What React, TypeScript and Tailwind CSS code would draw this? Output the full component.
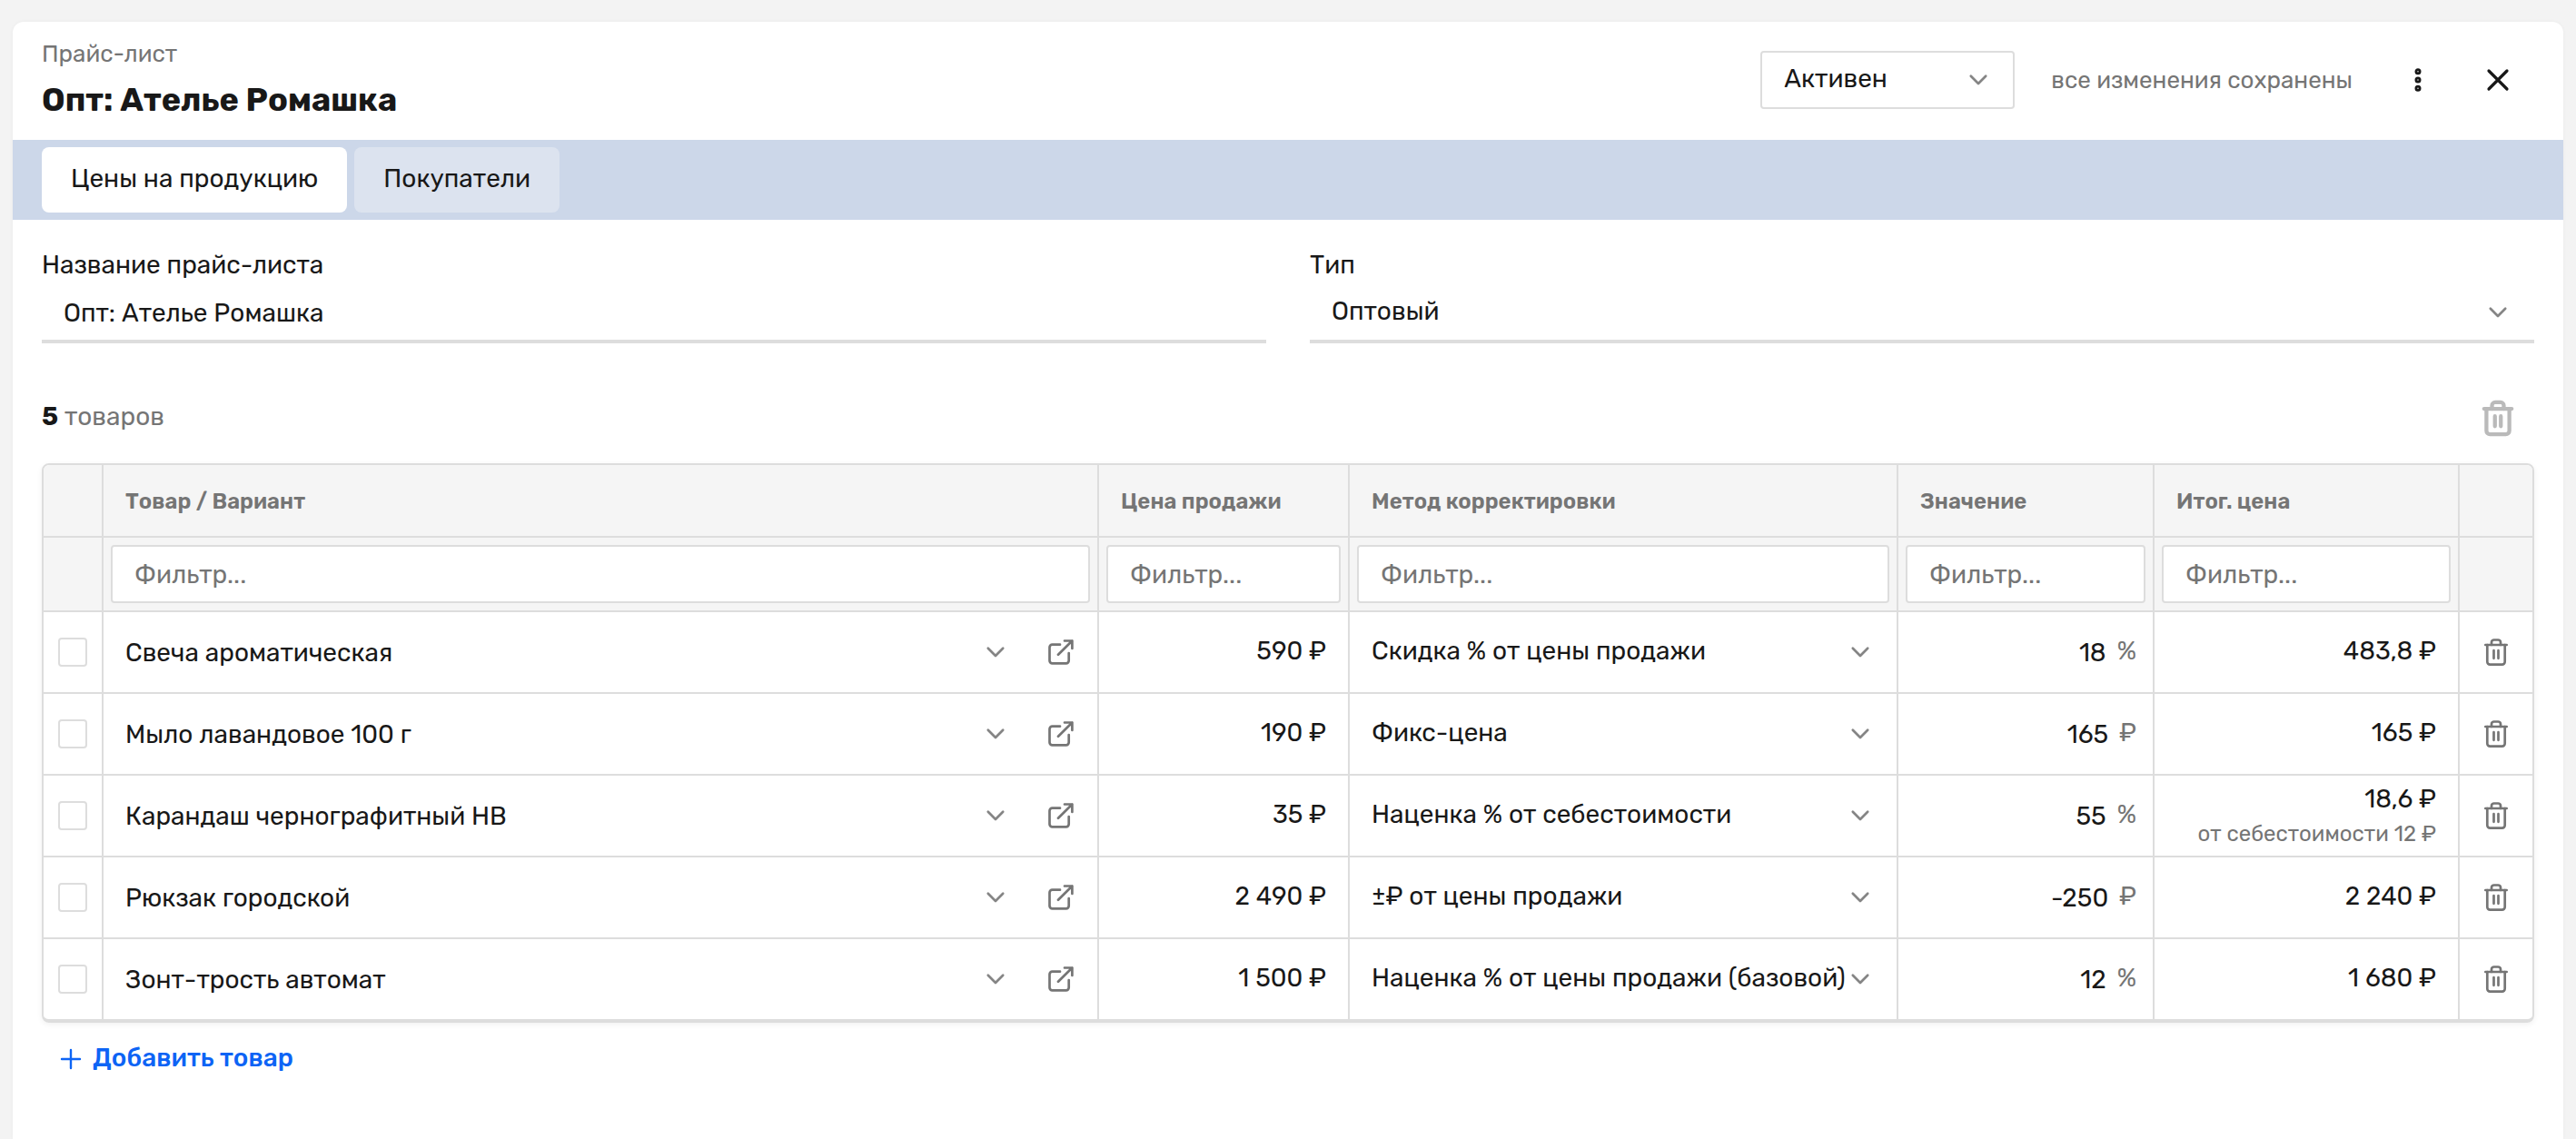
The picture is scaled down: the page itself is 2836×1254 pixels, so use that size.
import React from 'react';

interface PriceItem {
  id: number;
  name: string;
  price: string;
  method: string;
  value: string;
  unit: string;
  total: string;
  hint?: string;
}

const METHODS = [
  'Скидка % от цены продажи',
  'Фикс-цена',
  'Наценка % от себестоимости',
  '±₽ от цены продажи',
  'Наценка % от цены продажи (базовой)',
];

const ITEMS: PriceItem[] = [
  { id: 1, name: 'Свеча ароматическая', price: '590 ₽', method: METHODS[0], value: '18', unit: '%', total: '483,8 ₽' },
  { id: 2, name: 'Мыло лавандовое 100 г', price: '190 ₽', method: METHODS[1], value: '165', unit: '₽', total: '165 ₽' },
  { id: 3, name: 'Карандаш чернографитный HB', price: '35 ₽', method: METHODS[2], value: '55', unit: '%', total: '18,6 ₽', hint: 'от себестоимости 12 ₽' },
  { id: 4, name: 'Рюкзак городской', price: '2 490 ₽', method: METHODS[3], value: '-250', unit: '₽', total: '2 240 ₽' },
  { id: 5, name: 'Зонт-трость автомат', price: '1 500 ₽', method: METHODS[4], value: '12', unit: '%', total: '1 680 ₽' },
];

const COLUMNS = ['Товар / Вариант', 'Цена продажи', 'Метод корректировки', 'Значение', 'Итог. цена'];
const TABS = ['Цены на продукцию', 'Покупатели'];

const headCell = 'bg-[#f5f5f5] border-r-2 border-b-2 border-[#dddddd] last:border-r-0';
const bodyCell = 'h-[90px] border-r-2 border-b-2 border-[#dddddd] last:border-r-0 group-last:h-[88px] group-last:border-b-0';

const ChevronIcon = () => (
  <svg
    className="pointer-events-none absolute right-7 top-1/2 -translate-y-1/2 text-[#858585]"
    width="24"
    height="24"
    viewBox="0 0 24 24"
    fill="none"
    stroke="currentColor"
    strokeWidth="2.7"
    strokeLinecap="round"
    strokeLinejoin="round"
  >
    <path d="M3.8 7.8 12 16l8.2-8.2" />
  </svg>
);

const TrashIcon = ({ width, height, stroke }: { width: number; height: number; stroke: number }) => (
  <svg
    className="overflow-visible"
    width={width}
    height={height}
    viewBox="0 0 26 30"
    fill="none"
    stroke="currentColor"
    strokeWidth={stroke}
    strokeLinecap="round"
    strokeLinejoin="round"
  >
    <path d="M1.3 7h23.4" />
    <path d="M8 7V4.3a2.8 2.8 0 0 1 2.8-2.8h4.4A2.8 2.8 0 0 1 18 4.3V7" />
    <path d="M3.3 7v18.6a3 3 0 0 0 3 3h13.4a3 3 0 0 0 3-3V7" />
    <path d="M10.5 13.2v8.6M15.5 13.2v8.6" />
  </svg>
);

const ExternalIcon = () => (
  <svg width="28" height="28" viewBox="0 0 28 28" fill="none" stroke="currentColor" strokeWidth="2.7" strokeLinecap="round" strokeLinejoin="round">
    <path d="M13 5.7H4.5a3 3 0 0 0-3 3v14.6a3 3 0 0 0 3 3h15.2a3 3 0 0 0 3-3V15" />
    <path d="M11 16.8 26.4 1.5M18 1.5h8.4V10" />
  </svg>
);

interface SelectProps {
  label: string;
  value: string;
  options: string[];
  className: string;
  id?: string;
}

const Select: React.FC<SelectProps> = ({ label, value, options, className, id }) => (
  <div className="relative min-w-0 flex-1">
    <select id={id} aria-label={label} defaultValue={value} className={`w-full appearance-none bg-transparent pl-6 pr-12 outline-none ${className}`}>
      {options.map(o => (
        <option key={o}>{o}</option>
      ))}
    </select>
    <ChevronIcon />
  </div>
);

const PriceRow: React.FC<{ item: PriceItem }> = ({ item }) => (
  <tr className="group">
    <td className={bodyCell}>
      <input
        type="checkbox"
        aria-label={`Выбрать ${item.name}`}
        className="mx-auto block size-8 appearance-none rounded border-2 border-[#dddddd] bg-white checked:bg-[#0d64f5]"
      />
    </td>
    <td className={bodyCell}>
      <div className="flex items-center pr-2">
        <Select label="Товар" value={item.name} options={ITEMS.map(i => i.name)} className="h-16 pt-0.5" />
        <a href="#" aria-label="Открыть товар" className="flex size-16 items-center justify-center text-[#757575]">
          <ExternalIcon />
        </a>
      </div>
    </td>
    <td className={`${bodyCell} px-6 pb-0.5 text-right`}>{item.price}</td>
    <td className={bodyCell}>
      <Select label="Метод корректировки" value={item.method} options={METHODS} className="h-16 pb-0.5" />
    </td>
    <td className={bodyCell}>
      <div className="flex items-center gap-3 pr-[18px]">
        <input
          type="text"
          inputMode="decimal"
          aria-label="Значение"
          defaultValue={item.value}
          className="h-16 min-w-0 flex-1 bg-transparent pl-6 text-right outline-none"
        />
        <span className="pb-0.5 text-[#757575]">{item.unit}</span>
      </div>
    </td>
    <td className={`${bodyCell} px-6 text-right`}>
      {item.hint ? (
        <>
          <div className="leading-10">{item.total}</div>
          <div className="text-2xl leading-9 text-[#757575]">{item.hint}</div>
        </>
      ) : (
        <div className="pb-0.5 leading-10">{item.total}</div>
      )}
    </td>
    <td className={bodyCell}>
      <button type="button" aria-label="Удалить" className="mx-auto flex size-16 items-center justify-center text-[#757575]">
        <TrashIcon width={26} height={30} stroke={2.7} />
      </button>
    </td>
  </tr>
);

const App: React.FC = () => {
  const [activeTab, setActiveTab] = React.useState(TABS[0]);

  return (
    <div className="flex min-h-screen flex-col bg-[#f3f3f3] px-3.5 pt-6 font-['Rubik','Inter',sans-serif] text-[28px] leading-10 text-[#181818]">
      <main className="flex-1 rounded-t-xl bg-white shadow-[0_0_4px_rgba(0,0,0,0.04)]">
        <header className="flex h-[130px] items-start justify-between pl-8 pr-10">
          <div className="pt-4">
            <p className="text-[26px] leading-10 text-[#757575]">Прайс-лист</p>
            <h1 className="mt-2 text-4xl leading-11 font-bold">Опт: Ателье Ромашка</h1>
          </div>
          <div className="flex items-center gap-10 pt-8">
            <div className="flex w-[280px]">
              <Select
                label="Статус"
                value="Активен"
                options={['Активен', 'Неактивен']}
                className="h-16 rounded border-2 border-[#dddddd] pb-0.5"
              />
            </div>
            <span className="pt-0.5 text-[26px] text-[#757575]">все изменения сохранены</span>
            <div className="flex gap-6">
              <button type="button" aria-label="Меню" className="flex size-16 items-center justify-center">
                <svg width="32" height="32" viewBox="0 0 32 32" fill="none" stroke="currentColor" strokeWidth="2.8">
                  <circle cx="16" cy="6.7" r="2.1" />
                  <circle cx="16" cy="16" r="2.1" />
                  <circle cx="16" cy="25.3" r="2.1" />
                </svg>
              </button>
              <button type="button" aria-label="Закрыть" className="flex size-16 items-center justify-center">
                <svg width="32" height="32" viewBox="0 0 32 32" fill="none" stroke="currentColor" strokeWidth="3.2" strokeLinecap="round">
                  <path d="m6 6 20 20M26 6 6 26" />
                </svg>
              </button>
            </div>
          </div>
        </header>

        <nav className="flex gap-2 bg-[#ccd7e9] px-8 py-2">
          {TABS.map(tab => (
            <button
              key={tab}
              type="button"
              onClick={() => setActiveTab(tab)}
              className={`h-[72px] rounded-lg px-8 pb-0.5 ${tab === activeTab ? 'bg-white' : 'bg-[#dce3ef]'}`}
            >
              {tab}
            </button>
          ))}
        </nav>

        <div className="px-8 pt-[30px]">
          <div className="grid grid-cols-2 gap-12">
            <div>
              <label htmlFor="list-name" className="mb-0.5 block">Название прайс-листа</label>
              <div className="border-b-4 border-[#dddddd]">
                <input id="list-name" type="text" defaultValue="Опт: Ателье Ромашка" className="block h-15 w-full bg-transparent px-6 outline-none" />
              </div>
            </div>
            <div>
              <label htmlFor="list-type" className="mb-0.5 block">Тип</label>
              <div className="flex border-b-4 border-[#dddddd]">
                <Select id="list-type" label="Тип" value="Оптовый" options={['Оптовый', 'Розничный']} className="h-15 pb-0.5" />
              </div>
            </div>
          </div>

          <div className="mt-12 mb-4 flex h-[68px] items-center justify-between pr-2">
            <p className="pb-0.5 text-[#757575]">
              <span className="font-bold text-[#181818]">5</span> товаров
            </p>
            <button type="button" aria-label="Удалить выбранные" disabled className="flex size-16 items-center justify-center text-[#bababa]">
              <TrashIcon width={34} height={39} stroke={3.3} />
            </button>
          </div>

          <div className="overflow-hidden rounded-lg border-2 border-b-4 border-[#dddddd] shadow-[0_2px_6px_rgba(0,0,0,0.06)]">
            <table className="w-full table-fixed border-separate border-spacing-0">
              <colgroup>
                <col className="w-[66px]" />
                <col />
                <col className="w-[276px]" />
                <col className="w-[604px]" />
                <col className="w-[282px]" />
                <col className="w-[336px]" />
                <col className="w-[80px]" />
              </colgroup>
              <thead>
                <tr>
                  <td className={headCell} />
                  {COLUMNS.map(col => (
                    <th key={col} scope="col" className={`${headCell} h-20 px-6 pt-0.5 text-left text-2xl font-semibold text-[#757575]`}>
                      {col}
                    </th>
                  ))}
                  <td className={headCell} />
                </tr>
                <tr>
                  <td className={headCell} />
                  {COLUMNS.map(col => (
                    <td key={col} className={`${headCell} p-2`}>
                      <input
                        type="text"
                        placeholder="Фильтр..."
                        aria-label={`Фильтр: ${col}`}
                        className="block h-16 w-full rounded border-2 border-[#dddddd] bg-white px-6 outline-none placeholder:text-[#757575]"
                      />
                    </td>
                  ))}
                  <td className={headCell} />
                </tr>
              </thead>
              <tbody>
                {ITEMS.map(item => (
                  <PriceRow key={item.id} item={item} />
                ))}
              </tbody>
            </table>
          </div>

          <button type="button" className="ml-4 flex h-20 items-center gap-2 font-medium text-[#0d64f5]">
            <svg width="32" height="32" viewBox="0 0 32 32" fill="none" stroke="currentColor" strokeWidth="2.4" strokeLinecap="round">
              <path d="M16 6v20M6 16h20" />
            </svg>
            <span className="pb-0.5">Добавить товар</span>
          </button>
        </div>
      </main>
    </div>
  );
};

export default App;
